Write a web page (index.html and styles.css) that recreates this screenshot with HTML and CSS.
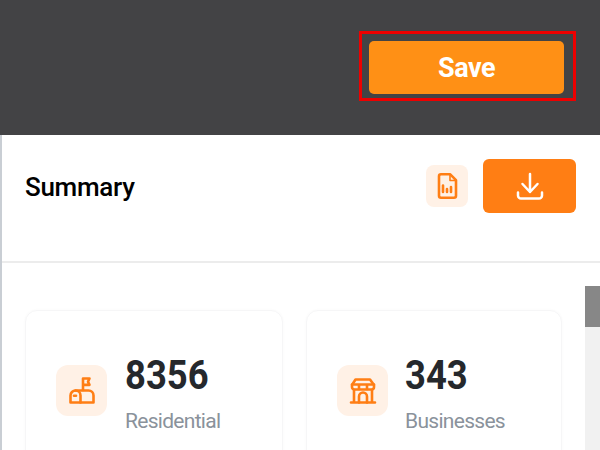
FILE: index.html
```html
<!DOCTYPE html>
<html lang="en">
<head>
<meta charset="utf-8">
<title>Summary</title>
<link rel="stylesheet" href="styles.css">
</head>
<body>
<header class="topbar">
  <div class="highlight"><button class="save">Save</button></div>
</header>
<main class="panel">
  <div class="panel-head">
    <h1 class="title">Summary</h1>
    <div class="actions">
      <span class="icon-box small">
        <svg class="ico" width="28" height="28" viewBox="0 0 28 28" fill="none" stroke="currentColor" stroke-width="2.600" stroke-linejoin="round" stroke-linecap="round">
          <path d="M8 2.200h9l6 6v15.600a2 2 0 0 1-2 2h-13a2 2 0 0 1-2-2v-19.600a2 2 0 0 1 2-2z"/>
          <path d="M17 3v5.500h5.500" stroke-width="1.600"/>
          <path d="M10 13.500v6.500M14 17v3M18 15v5"/>
        </svg>
      </span>
      <button class="download">
        <svg width="28" height="28" viewBox="0 0 28 28" fill="none" stroke="currentColor" stroke-width="2.500" stroke-linecap="round" stroke-linejoin="round">
          <path d="M14 2v18M6.500 12l7.500 8 7.500-8"/>
          <path d="M2 20.500v3a3 3 0 0 0 3 3h18a3 3 0 0 0 3-3v-3"/>
        </svg>
      </button>
    </div>
  </div>
  <div class="body">
    <div class="cards">
      <section class="card">
        <span class="icon-box">
          <svg class="ico" width="28" height="28" viewBox="0 0 28 28" fill="none" stroke="currentColor" stroke-width="2.600" stroke-linejoin="round" stroke-linecap="round">
            <path d="M2.500 25.500v-7a5 5 0 0 1 5-5h13a5 5 0 0 1 5 5v7z"/>
            <path d="M12.500 25.500v-7a5 5 0 0 0-5-5"/>
            <path d="M15 13v-11.500h6.500l-1.500 3.200 1.500 3.200h-6.500"/>
            <path d="M6 18.800h2"/>
          </svg>
        </span>
        <div class="stat"><div class="num">8356</div><div class="label">Residential</div></div>
      </section>
      <section class="card">
        <span class="icon-box">
          <svg class="ico" width="28" height="28" viewBox="0 0 28 28" fill="none" stroke="currentColor" stroke-width="2.600" stroke-linejoin="round" stroke-linecap="round">
            <path d="M6.500 2.500h14.500l4 5.500v2a2.500 2.500 0 0 1-2.500 2.500h-17a2.500 2.500 0 0 1-2.500-2.500v-2z"/>
            <path d="M3 7.500h22M10 8v4M18 8v4"/>
            <path d="M5 13v12.500M23 13v12.500M2 25.500h24"/>
            <path d="M10 25.500v-6a4 4 0 0 1 8 0v6"/>
          </svg>
        </span>
        <div class="stat"><div class="num">343</div><div class="label">Businesses</div></div>
      </section>
    </div>
    <div class="scrollbar"><div class="thumb"></div></div>
  </div>
</main>
</body>
</html>
```
FILE: styles.css
```css
* { box-sizing: border-box; }
html, body { margin: 0; height: 450px; overflow: hidden; }
body { font-family: Roboto, "Liberation Sans", sans-serif; background: #fff; }
.topbar { height: 135px; background: #434345; display: flex; justify-content: flex-end; padding: 31px 24px 0 0; }
.highlight { width: 217px; height: 70px; border: 3px solid #ee0000; padding: 7px 9px 4px 7px; }
.save { display: block; width: 195px; height: 53px; border: 0; border-radius: 5px; background: #ff9015; color: #fff; font: 700 27px Roboto, sans-serif; letter-spacing: -.5px; }
.panel { height: 315px; border-left: 2px solid #c9ced4; display: flex; flex-direction: column; }
.panel-head { height: 128px; border-bottom: 2px solid #ececec; display: flex; justify-content: space-between; padding: 24px 24px 0 23px; }
.title { margin: 14px 0 0; font-size: 26px; line-height: 28px; font-weight: 500; letter-spacing: -.3px; color: #000; }
.actions { display: flex; gap: 15px; align-items: flex-start; }
.icon-box { width: 51px; height: 51px; border-radius: 12px; background: #fff1e6; color: #ff7e14; display: flex; align-items: center; justify-content: center; flex: none; }
.icon-box.small { width: 42px; height: 42px; border-radius: 8px; margin-top: 6px; }
.download { width: 93px; height: 54px; border: 0; border-radius: 6px; background: #ff7e14; color: #fff; display: flex; align-items: center; justify-content: center; padding: 0; }
.body { flex: 1; display: flex; min-height: 0; }
.cards { flex: 1; display: flex; gap: 23px; padding: 47px 23px 0 23px; }
.card { width: 258px; height: 160px; border: 1px solid #f6f6f7; border-radius: 12px; box-shadow: 0 0 3px rgba(0,0,0,.03); display: flex; gap: 18px; padding: 54px 0 0 30px; }
.card + .card { width: 256px; gap: 17px; }
.num { font-size: 40px; line-height: 44px; font-weight: 700; color: #25282c; margin-top: -11px; transform: scaleX(.91); transform-origin: left; }
.label { font-size: 21px; line-height: 24px; color: #8a929b; margin-top: 11px; letter-spacing: -.7px; }
.scrollbar { width: 15px; margin-top: 23px; background: #f1f1f1; }
.thumb { height: 41px; background: #878787; }
```
